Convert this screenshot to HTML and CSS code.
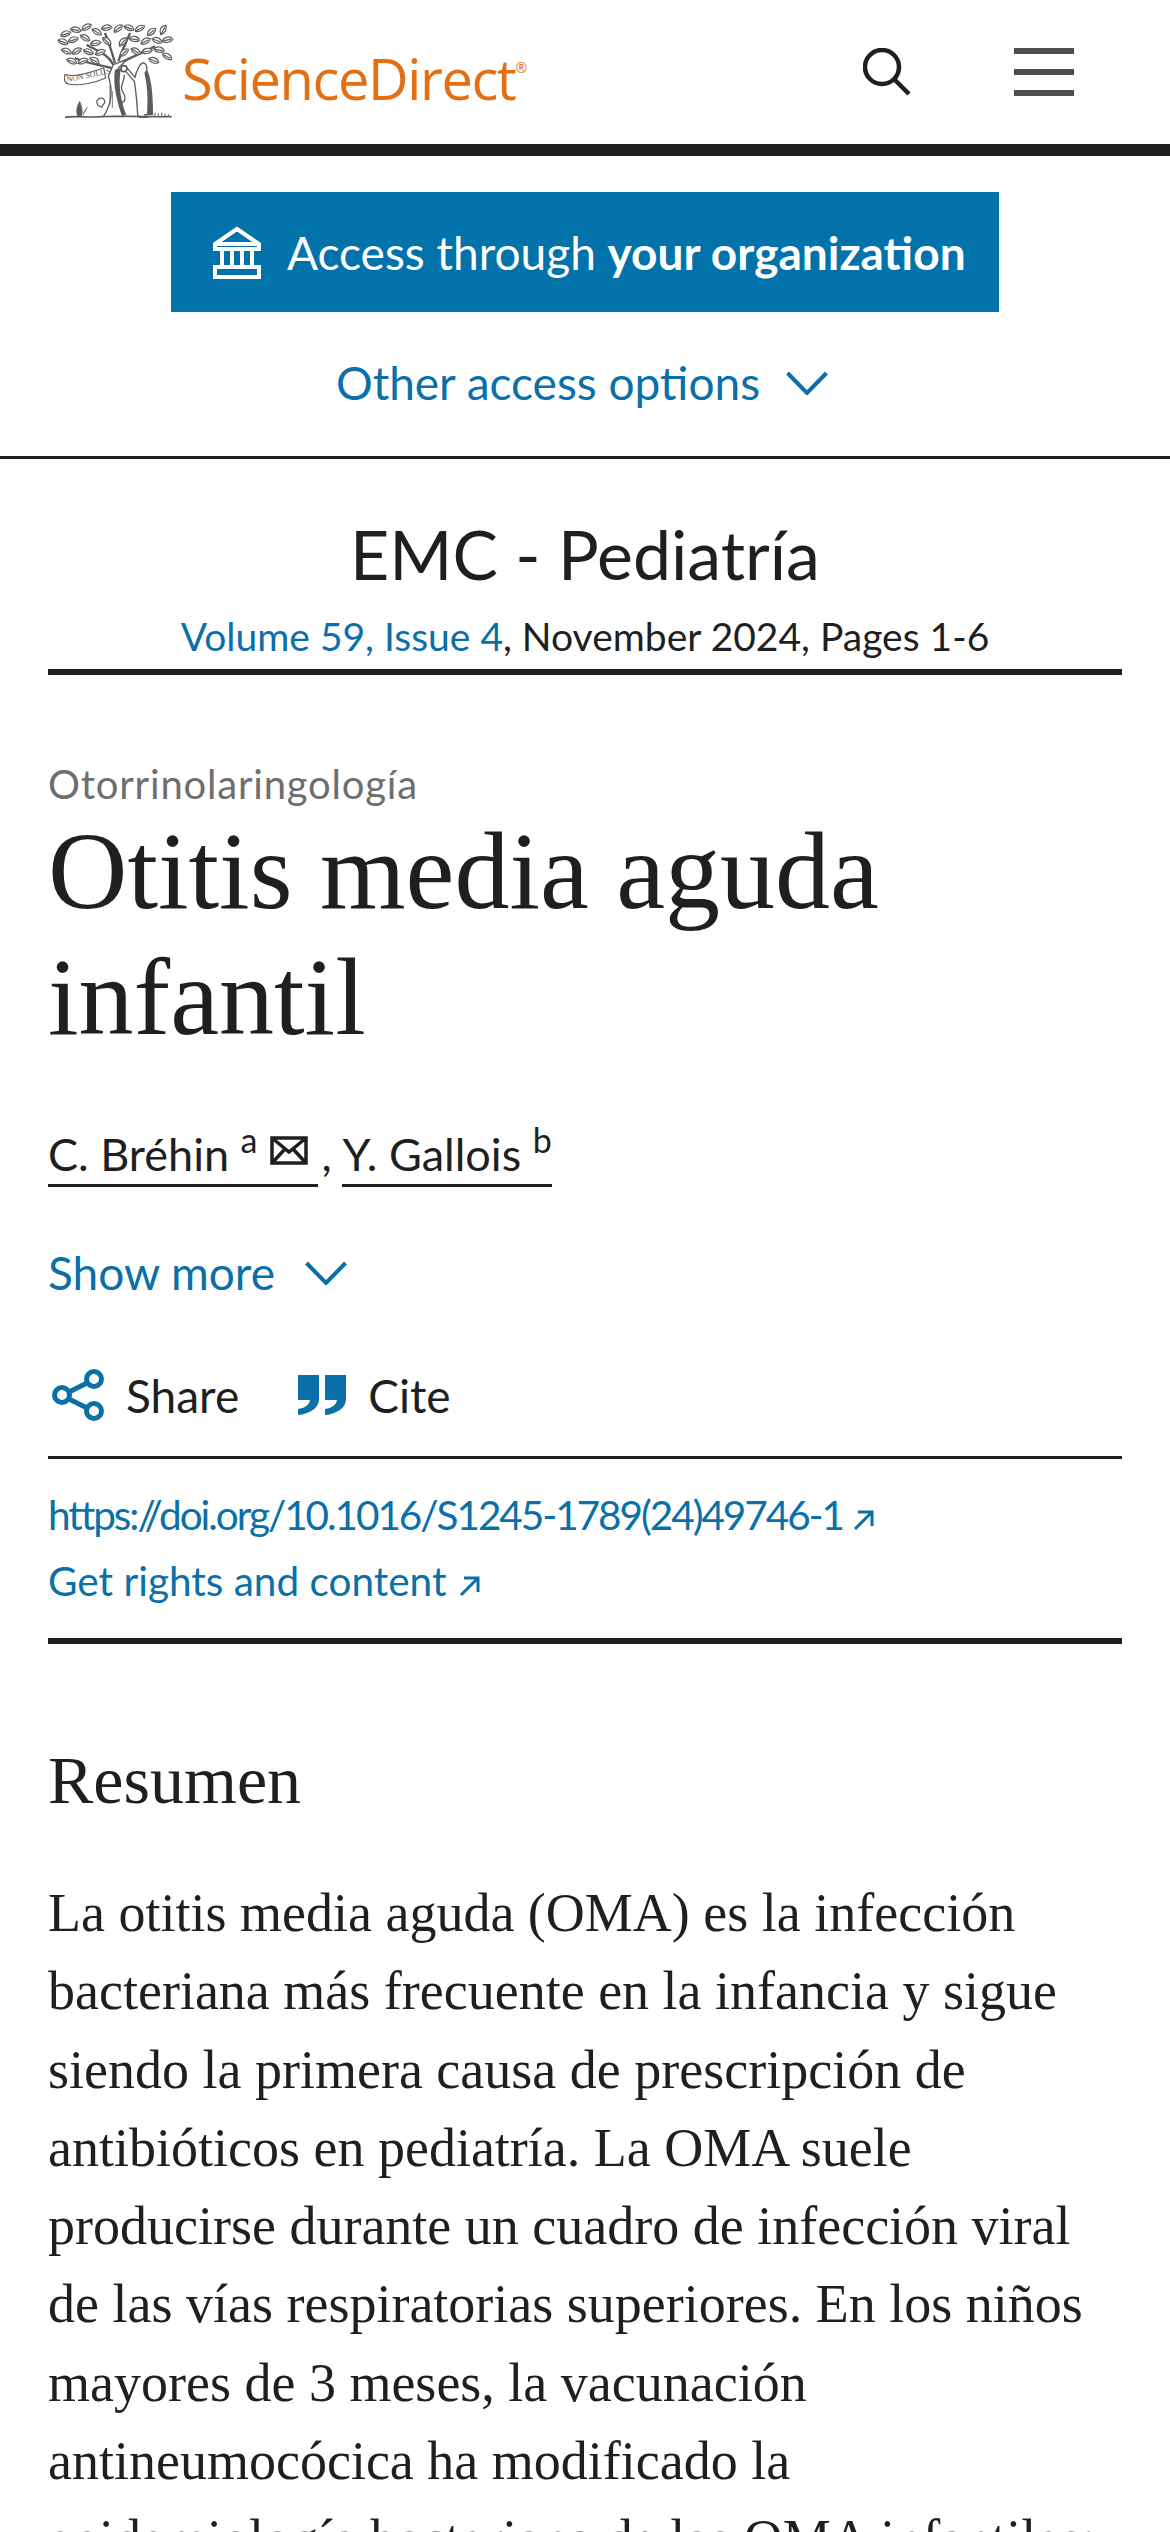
FILE: index.html
```html
<!DOCTYPE html>
<html lang="es">
<head>
<meta charset="utf-8">
<title>Otitis media aguda infantil</title>
<link rel="stylesheet" href="styles.css">
</head>
<body>
<header class="top">
  <a class="logo">
    <svg class="tree" viewBox="0 0 375 315" width="125" height="105">
      <defs>
        <path id="leaf" d="M-16 0C-8-12 8-12 16 0 8 9-8 9-16 0zM-12 0H10" fill="#fff" stroke="#5b5d5d" stroke-width="3.5"/>
      </defs>
      <path d="M175 140C160 110 130 100 95 80M180 135C170 100 160 70 150 45M190 130C200 100 215 70 225 45M195 135C225 120 260 105 300 85M170 150C130 140 90 135 60 120" fill="none" stroke="#5b5d5d" stroke-width="7"/>
      <use href="#leaf" transform="translate(32 48) rotate(-20)"/><use href="#leaf" transform="translate(62 36) rotate(10)"/><use href="#leaf" transform="translate(95 28) rotate(-30)"/><use href="#leaf" transform="translate(125 42) rotate(30)"/><use href="#leaf" transform="translate(155 30) rotate(-10)"/><use href="#leaf" transform="translate(190 32) rotate(-40)"/><use href="#leaf" transform="translate(222 30) rotate(20)"/><use href="#leaf" transform="translate(255 32) rotate(-30)"/><use href="#leaf" transform="translate(290 42) rotate(-40)"/><use href="#leaf" transform="translate(325 36) rotate(-60)"/>
      <use href="#leaf" transform="translate(24 72) rotate(20)"/><use href="#leaf" transform="translate(55 66) rotate(-20)"/><use href="#leaf" transform="translate(90 60) rotate(30)"/><use href="#leaf" transform="translate(122 76) rotate(-10)"/><use href="#leaf" transform="translate(155 70) rotate(40)"/><use href="#leaf" transform="translate(204 72) rotate(-50)"/><use href="#leaf" transform="translate(238 64) rotate(10)"/><use href="#leaf" transform="translate(272 70) rotate(-30)"/><use href="#leaf" transform="translate(306 68) rotate(20)"/><use href="#leaf" transform="translate(338 66) rotate(-10)"/>
      <use href="#leaf" transform="translate(34 100) rotate(20)"/><use href="#leaf" transform="translate(66 100) rotate(-30)"/><use href="#leaf" transform="translate(100 102) rotate(20)"/><use href="#leaf" transform="translate(136 104) rotate(-20)"/><use href="#leaf" transform="translate(208 104) rotate(-40)"/><use href="#leaf" transform="translate(242 100) rotate(30)"/><use href="#leaf" transform="translate(276 100) rotate(-10)"/><use href="#leaf" transform="translate(312 96) rotate(10)"/><use href="#leaf" transform="translate(336 116) rotate(30)"/>
      <use href="#leaf" transform="translate(50 130) rotate(20)"/><use href="#leaf" transform="translate(84 130) rotate(-20)"/><use href="#leaf" transform="translate(118 128) rotate(30)"/><use href="#leaf" transform="translate(296 128) rotate(20)"/>
      <path d="M160 175C172 210 172 255 145 296H205C190 255 178 195 190 150L215 125 175 140Z" fill="#fff" stroke="#5b5d5d" stroke-width="4"/>
      <path d="M180 155C172 195 186 250 200 292H214C198 250 188 200 198 150Z" fill="#5b5d5d"/>
      <path d="M165 200v60M172 220v50" stroke="#5b5d5d" stroke-width="2.5" fill="none"/>
      <path d="M208 170C210 190 190 205 205 225 215 240 210 250 200 255" fill="none" stroke="#5b5d5d" stroke-width="4"/>
      <circle cx="207" cy="152" r="9" fill="#fff" stroke="#5b5d5d" stroke-width="5"/>
      <path d="M30 170C60 178 100 165 146 150L152 180C120 195 70 205 40 198 28 196 26 180 30 170Z" fill="#fff" stroke="#5b5d5d" stroke-width="3.5"/>
      <text x="36" y="192" class="motto" transform="rotate(-11 36 192)">NON SOLUS</text>
      <path d="M250 150C262 126 276 132 276 160 290 190 292 240 292 290H270L276 298H254L248 290C246 255 244 225 238 190L212 160 218 152 240 178C242 168 246 158 250 150Z" fill="#fff" stroke="#5b5d5d" stroke-width="4"/>
      <path d="M274 155C288 190 292 240 292 288H276C280 240 276 195 268 165Z" fill="#5b5d5d"/>
      <path d="M30 298C60 292 100 300 140 296S250 298 350 296" fill="none" stroke="#5b5d5d" stroke-width="5"/>
      <path d="M68 294C62 280 66 265 74 250 80 265 84 280 80 294ZM84 292C86 282 92 272 98 268" fill="#5b5d5d" stroke="#5b5d5d" stroke-width="2"/>
      <path d="M125 250C132 236 148 238 150 252L140 268 128 262Z" fill="#fff" stroke="#5b5d5d" stroke-width="3.5"/>
      <path d="M300 296v-12M310 296v-10M320 296v-12M330 296v-9M340 296v-7" stroke="#5b5d5d" stroke-width="3"/>
    </svg>
    <span class="wordmark">ScienceDirect<sup class="reg">®</sup></span>
  </a>
  <div class="top-actions">
    <svg viewBox="0 0 48 48" width="48" height="48" fill="none" stroke="#1f1f1f" stroke-width="4.5"><circle cx="19" cy="19" r="17"/><path d="M31 31l15 15"/></svg>
    <div class="burger"><i></i><i></i><i></i></div>
  </div>
</header>

<section class="access">
  <a class="access-btn">
    <svg viewBox="0 0 48 53" width="48" height="53" fill="none" stroke="#fff" stroke-width="4"><path d="M2 18 24 3l22 15zM2 18v5h44v-5M9 23v18M19 23v18M29 23v18M39 23v18M2 41h44v10H2z"/></svg>
    <span>Access through <b>your organization</b></span>
  </a>
  <a class="access-more">Other access options
    <svg viewBox="0 0 42 24" width="42" height="24" fill="none" stroke="#0b6fa8" stroke-width="4"><path d="M1.5 2 21 22 40.5 2"/></svg>
  </a>
</section>

<section class="journal">
  <h2 class="journal-name">EMC - Pediatría</h2>
  <p class="journal-info"><a class="link">Volume 59, Issue 4</a>, November 2024, Pages 1-6</p>
</section>

<main class="article">
  <p class="kicker">Otorrinolaringología</p>
  <h1 class="title">Otitis media aguda infantil</h1>
  <p class="authors"><a class="author author-mail">C. Bréhin <sup>a</sup><svg class="mail" viewBox="0 0 38 30" width="38" height="30" fill="none" stroke="#1f1f1f" stroke-width="3.5"><path d="M2 3h34v25H2zM2 3l17 14L36 3M2 28l13-14M36 28 23 14"/></svg></a><span class="sep">,</span><a class="author">Y. Gallois <sup>b</sup></a></p>
  <a class="show-more">Show more
    <svg viewBox="0 0 42 24" width="42" height="24" fill="none" stroke="#0b6fa8" stroke-width="4"><path d="M1.5 2 21 22 40.5 2"/></svg>
  </a>
  <div class="tools">
    <a class="tool">
      <svg viewBox="0 0 52 52" width="52" height="52" fill="none" stroke="#0b6fa8" stroke-width="5"><circle cx="42" cy="10" r="7.5"/><circle cx="10" cy="26" r="7.5"/><circle cx="42" cy="42" r="7.5"/><path d="M35 14 17 23M17 30l18 9"/></svg>
      Share</a>
    <a class="tool">
      <svg viewBox="0 0 48 40" width="48" height="40" fill="#0b6fa8"><path d="M0 0h21v24c0 9-9 15-21 16v-6c7-1 11-4 12-9H0zM27 0h21v24c0 9-9 15-21 16v-6c7-1 11-4 12-9H27z"/></svg>
      Cite</a>
  </div>
  <div class="links">
    <a class="small-link doi">https://doi.org/10.1016/S1245-1789(24)49746-1 <svg class="ext" viewBox="0 0 22 22" width="22" height="22" fill="none" stroke="#0b6fa8" stroke-width="3"><path d="M2 20 19 3M5 3h14v14"/></svg></a>
    <a class="small-link">Get rights and content <svg class="ext" viewBox="0 0 22 22" width="22" height="22" fill="none" stroke="#0b6fa8" stroke-width="3"><path d="M2 20 19 3M5 3h14v14"/></svg></a>
  </div>
  <h2 class="section-head">Resumen</h2>
  <p class="abstract">La otitis media aguda (OMA) es la infección<br>bacteriana más frecuente en la infancia y sigue<br>siendo la primera causa de prescripción de<br>antibióticos en pediatría. La OMA suele<br>producirse durante un cuadro de infección viral<br>de las vías respiratorias superiores. En los niños<br>mayores de 3 meses, la vacunación<br>antineumocócica ha modificado la<br>epidemiología bacteriana de las OMA infantiles;</p>
</main>
</body>
</html>
```
FILE: styles.css
```css
* { box-sizing: border-box; }
html, body { margin: 0; padding: 0; height: 2532px; overflow: hidden; background: #fff; }
body { font-family: "Lato", "Noto Sans", sans-serif; color: #1f1f1f; }
a { color: inherit; text-decoration: none; }
p, h1, h2 { margin: 0; font-weight: 400; }

.top { height: 156px; border-bottom: 12px solid #1f1f1f; padding: 18px 96px 0 55px; display: flex; justify-content: space-between; align-items: flex-start; }
.logo { display: flex; align-items: center; gap: 2px; }
.tree { display: block; flex: none; }
.motto { font-family: "Liberation Serif", serif; font-size: 24px; fill: #5b5d5d; }
.wordmark { font-family: "Open Sans", sans-serif; font-size: 56px; padding-top: 14px; color: #e46f12; letter-spacing: -1.4px; line-height: 76px; }
.reg { font-size: 14px; vertical-align: 27px; line-height: 0; letter-spacing: 0; }
.top-actions { display: flex; align-items: center; gap: 103px; padding-top: 30px; }
.burger { width: 60px; display: flex; flex-direction: column; gap: 15px; }
.burger i { display: block; height: 6px; background: #4f4f4f; }

.access { height: 303px; border-bottom: 3px solid #1f1f1f; padding-top: 36px; display: flex; flex-direction: column; align-items: center; }
.access-btn { width: 828px; height: 120px; background: #0272ab; color: #fff; display: flex; align-items: center; padding-left: 42px; gap: 26px; font-size: 46px; }
.access-btn b { font-weight: 700; }
.access-more { margin: 41px 6px 0 0; font-size: 46px; line-height: 60px; color: #0b6fa8; display: flex; align-items: center; gap: 26px; }

.journal { text-align: center; padding: 58px 48px 0; }
.journal-name { font-size: 68px; line-height: 74px; }
.journal-info { margin-top: 19px; padding-bottom: 7px; font-size: 39px; line-height: 52px; border-bottom: 6px solid #1f1f1f; }
.link { color: #0b6fa8; }

.article { padding: 0 48px; }
.kicker { margin-top: 84px; font-size: 40px; line-height: 50px; color: #6e6e6e; letter-spacing: 0.8px; }
.title { font-family: "Liberation Serif", serif; font-size: 110px; line-height: 126px; margin-top: -1px; width: 900px; }
.authors { margin-top: 64px; font-size: 45px; line-height: 60px; display: flex; }
.author { display: block; border-bottom: 3px solid #1f1f1f; white-space: pre; }
.author sup { font-size: 34px; line-height: 0; vertical-align: 18px; }
.author-mail { padding-right: 10px; }
.sep { width: 24px; flex: none; padding-left: 3px; }
.mail { margin-left: 13px; vertical-align: 6px; }
.show-more { margin-top: 56px; font-size: 46px; line-height: 60px; color: #0b6fa8; display: flex; align-items: center; gap: 30px; }
.tools { margin-top: 61px; height: 62px; display: flex; gap: 59px; padding-left: 4px; }
.tool { display: flex; align-items: center; gap: 22px; font-size: 46px; }
.links { margin-top: 30px; padding: 31px 0 32px; border-top: 3px solid #1f1f1f; border-bottom: 6px solid #1f1f1f; display: flex; flex-direction: column; gap: 16px; }
.small-link { font-size: 40.5px; line-height: 50px; color: #0b6fa8; }
.doi { letter-spacing: -2.05px; }
.ext { vertical-align: -1px; margin-left: 2px; }
.section-head { font-family: "Liberation Serif", serif; font-size: 68px; line-height: 80px; margin-top: 96px; }
.abstract { font-family: "Liberation Serif", serif; font-size: 54px; line-height: 78.3px; margin-top: 54px; white-space: nowrap; }
```
